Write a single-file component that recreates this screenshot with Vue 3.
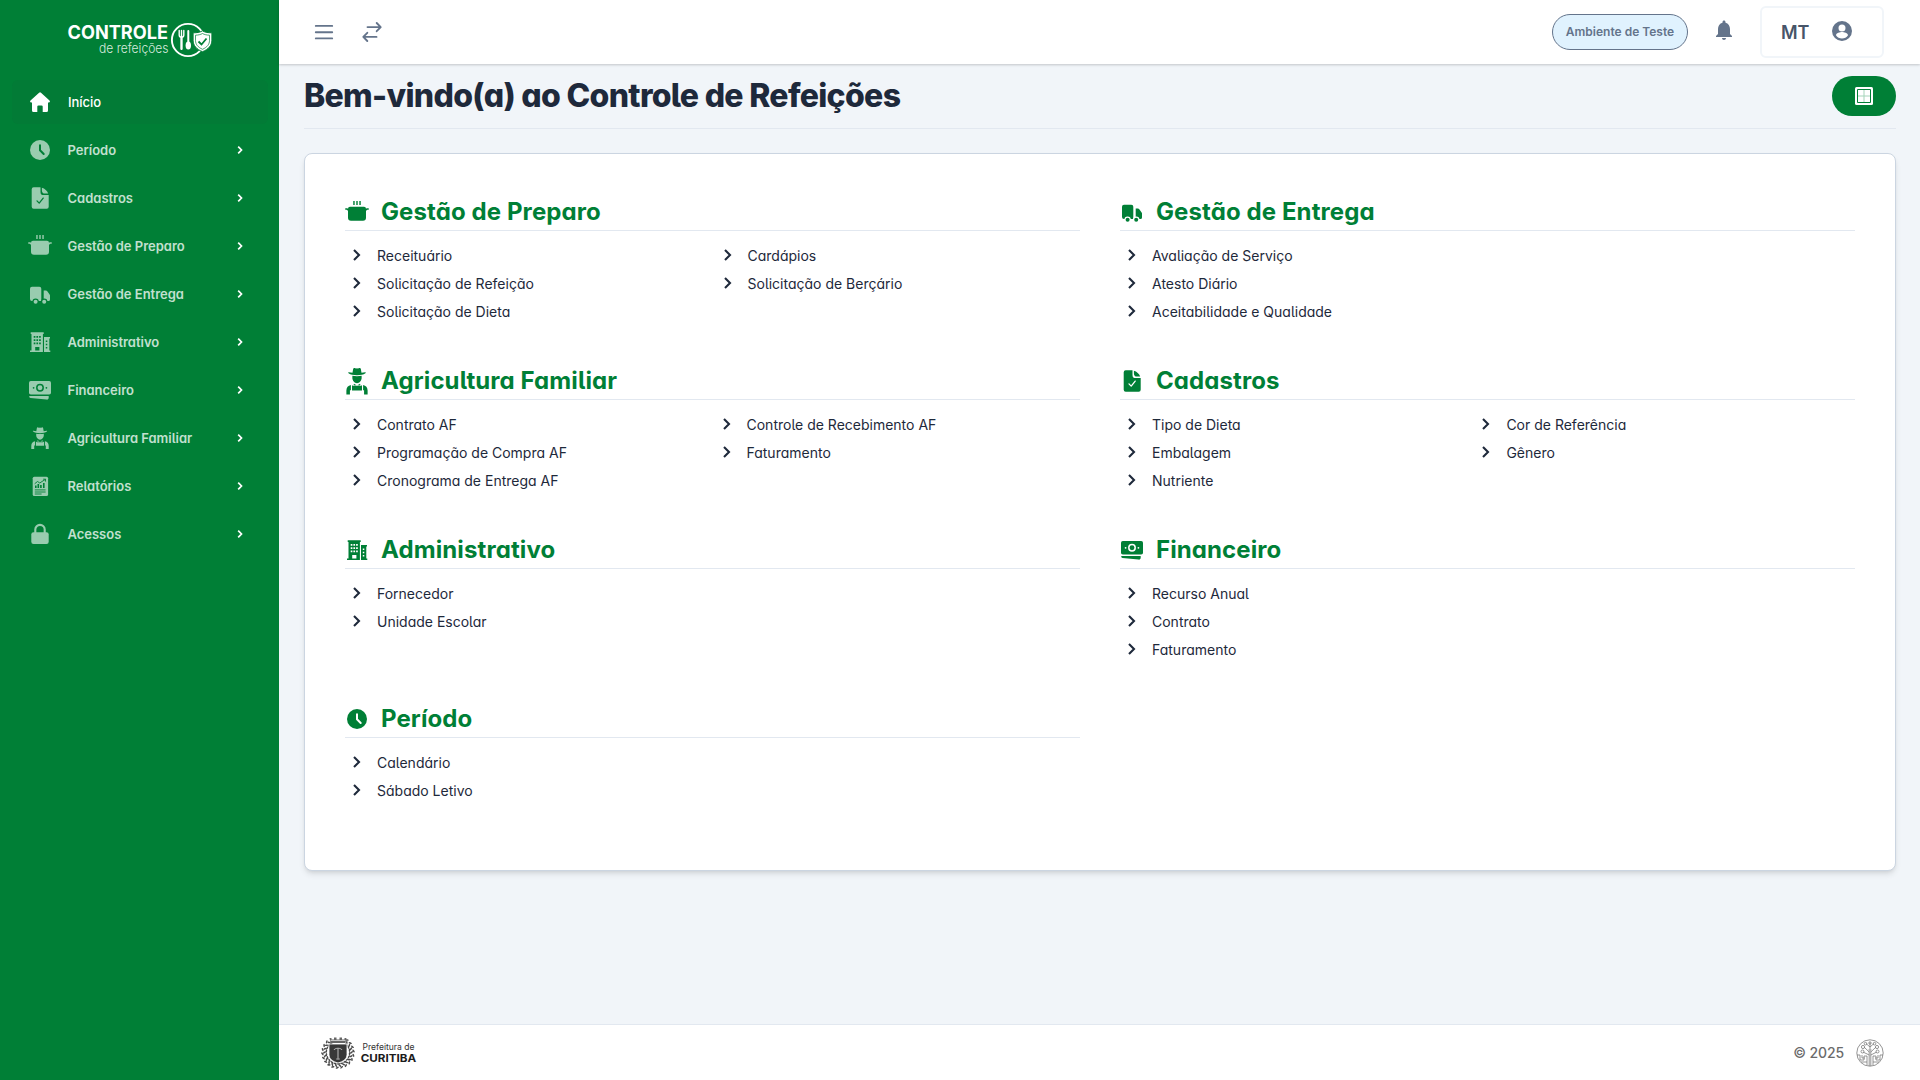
<script setup>
import { h } from 'vue'

const p = (d, extra = {}) => h('path', { d, ...extra })
const line = (d, w = 1.5, color = 'currentColor') =>
  h('path', { d, fill: 'none', stroke: color, 'stroke-width': w, 'stroke-linecap': 'round', 'stroke-linejoin': 'round' })
const cut = 'var(--cut)'

const glyphs = {
  home: () => [
    p('M11.1 2.7a1.4 1.4 0 0 1 1.9 0l8.5 7.9c.8.8.4 1.9-.6 1.9H20v8a1.500 1.500 0 0 1-1.500 1.500h-3.800v-5.400a1.200 1.200 0 0 0-1.200-1.200h-3a1.200 1.200 0 0 0-1.200 1.200V22H5.500A1.500 1.500 0 0 1 4 20.500v-8h-.9c-1 0-1.400-1.100-.6-1.900z'),
  ],
  clock: () => [h('circle', { cx: 12, cy: 12, r: 10 }), line('M12 7.200v5l3.700 3.800', 2, cut)],
  file: () => [
    p('M5.700 1.300h6.800v4.600a3.200 3.200 0 0 0 3.200 3.200h5v11.600a2 2 0 0 1-2 2h-13a2 2 0 0 1-2-2V3.300a2 2 0 0 1 2-2z'),
    p('M13.900 1.700c2.900.8 5.300 3 6.300 5.900h-3.200a3.100 3.100 0 0 1-3.100-3.100z'),
    line('M9 14.900l2.200 2.200 4-5', 1.300, cut),
  ],
  pot: () => [
    p('M8 1h1.900v4H8zM11.050 1h1.900v4h-1.900zM14.100 1H16v4h-1.900z', { opacity: 0.75 }),
    p('M5 6.700h14a2 2 0 0 1 2 2V17.700a3 3 0 0 1-3 3H6a3 3 0 0 1-3-3V8.700a2 2 0 0 1 2-2z'),
    line('M.8 8.900h1.100L4 10.700M23.200 8.900h-1.100L20 10.700', 1.500),
  ],
  truck: () => [
    p('M4 4.700h7.300a2 2 0 0 1 2 2V19H4a2 2 0 0 1-2-2V6.700a2 2 0 0 1 2-2z'),
    p('M15.700 8.500h2.200c.6 0 1 .2 1.400.7l2.300 3.200c.3.400.4.800.4 1.200V17.500a1.500 1.500 0 0 1-1.500 1.500h-4.800z'),
    h('circle', { cx: 7.6, cy: 19.8, r: 3.2, fill: cut }),
    h('circle', { cx: 16.2, cy: 19.8, r: 3.2, fill: cut }),
    h('circle', { cx: 7.6, cy: 19.8, r: 2 }),
    h('circle', { cx: 16.2, cy: 19.8, r: 2 }),
  ],
  building: () => [
    p('M2.700 2.300h13v1.600h-.8V22H2v-1.500h1.500V3.900h-.8zM16 7h6v1.500h-.7v12h1V22H16z'),
    p('M5.700 6h1.700v1.700H5.700zM8.400 6h1.700v1.700H8.400zM11.100 6h1.700v1.700h-1.700zM5.700 9.300h1.700V11H5.700zM8.400 9.300h1.700V11H8.400zM11.100 9.300h1.700V11h-1.700zM5.700 12.600h1.700v1.700H5.700zM8.400 12.600h1.700v1.700H8.400zM11.100 12.600h1.700v1.700h-1.700zM7.200 17h4.200v3.500H7.200zM17.800 10.500h1.500v1.500h-1.500zM17.800 13.700h1.500v1.500h-1.500zM17.800 16.900h1.500v1.500h-1.500z', { fill: cut }),
  ],
  money: () => [
    h('rect', { x: 1, y: 3, width: 22, height: 13.6, rx: 1.8 }),
    h('circle', { cx: 12, cy: 9.8, r: 3.2, fill: 'none', stroke: cut, 'stroke-width': 1.5 }),
    h('circle', { cx: 5.6, cy: 9.8, r: 0.9, fill: cut }),
    h('circle', { cx: 18.4, cy: 9.8, r: 0.9, fill: cut }),
    p('M1.300 18h19.400v1.800c0 1.200-.9 2-2.200 1.800L2.500 20c-.7-.1-1.200-.5-1.200-1.200z'),
  ],
  farmer: () => [
    p('M8.300 5.200l.6-3.200c.1-.6.8-.9 1.300-.6.6.4 1 .4 1.800.1.800.3 1.200.3 1.800-.1.500-.3 1.200 0 1.300.6l.6 3.200 3-.4c.5 0 .6.5.2.8C17.300 6.800 15 7.200 12 7.200s-5.300-.4-6.900-1.600c-.4-.3-.3-.8.2-.8z'),
    p('M8.200 7.700c2.500.5 5.100.5 7.600 0v1.900c0 2-1.700 4.200-3.800 4.200s-3.800-2.200-3.800-4.200z'),
    p('M9.500 14.300l2.500 1.400 2.500-1.400.4 1.300H9.100z'),
    p('M7 15.300v4.200h-.8V23H3.300v-3.300c0-2.300 1.400-4 3.700-4.400zM17 15.300v4.200h.8V23h2.900v-3.300c0-2.300-1.400-4-3.700-4.400z'),
    p('M7.900 15.400l1.200.8h5.800l1.200-.8v4.300H7.900z'),
  ],
  report: () => [
    h('rect', { x: 4.7, y: 2.7, width: 15.4, height: 19.3, rx: 1.6 }),
    line('M7 9.500l2.500-2 2.300 1.500L14 7.500l3.300-2M15.500 5.200h2v2', 0.9, cut),
    p('M7 11.500h1.600v2.500H7zM9.500 10h1.600v4H9.500zM12.100 11h1.600v3h-1.600zM15 9h1.600v5H15z', { fill: cut }),
    line('M7.200 15.900h10M7.200 18h10M7.200 20h6', 0.9, cut),
  ],
  lock: () => [
    line('M7.300 11V7.600a4.700 4.700 0 0 1 9.400 0V11', 2.100),
    h('rect', { x: 3.300, y: 10.3, width: 17.4, height: 11.7, rx: 2.2 }),
  ],
}

const Glyph = (props) =>
  h('svg', { viewBox: '0 0 24 24', width: 24, height: 24, fill: 'currentColor', style: { display: 'block', overflow: 'visible' } }, glyphs[props.name]())
Glyph.props = ['name']

const menu = [
  { label: 'Início', icon: 'home', active: true },
  { label: 'Período', icon: 'clock' },
  { label: 'Cadastros', icon: 'file' },
  { label: 'Gestão de Preparo', icon: 'pot' },
  { label: 'Gestão de Entrega', icon: 'truck' },
  { label: 'Administrativo', icon: 'building' },
  { label: 'Financeiro', icon: 'money' },
  { label: 'Agricultura Familiar', icon: 'farmer' },
  { label: 'Relatórios', icon: 'report' },
  { label: 'Acessos', icon: 'lock' },
]

const sections = [
  { title: 'Gestão de Preparo', icon: 'pot', split: 370.5, items: ['Receituário', 'Solicitação de Refeição', 'Solicitação de Dieta', 'Cardápios', 'Solicitação de Berçário'] },
  { title: 'Gestão de Entrega', icon: 'truck', split: 370.5, items: ['Avaliação de Serviço', 'Atesto Diário', 'Aceitabilidade e Qualidade'] },
  { title: 'Agricultura Familiar', icon: 'farmer', split: 369.5, items: ['Contrato AF', 'Programação de Compra AF', 'Cronograma de Entrega AF', 'Controle de Recebimento AF', 'Faturamento'] },
  { title: 'Cadastros', icon: 'file', split: 354.4, items: ['Tipo de Dieta', 'Embalagem', 'Nutriente', 'Cor de Referência', 'Gênero'] },
  { title: 'Administrativo', icon: 'building', split: 370.5, items: ['Fornecedor', 'Unidade Escolar'] },
  { title: 'Financeiro', icon: 'money', split: 370.5, items: ['Recurso Anual', 'Contrato', 'Faturamento'] },
  { title: 'Período', icon: 'clock', split: 370.5, items: ['Calendário', 'Sábado Letivo'] },
]

// Wreath around the coat of arms: three rings of small leaves, open at the top.
const leaves = Array.from({ length: 54 }, (_, i) => {
  const deg = (i * 290) / 53 - 55
  const a = (deg * Math.PI) / 180
  const r = [15.2, 13.2, 11.4][i % 3]
  return { x: 17 + Math.cos(a) * r * 1.03, y: 17.5 + Math.sin(a) * r, rot: deg + [60, -40, 100][i % 3] }
})
</script>

<template>
  <div class="layout">
    <aside class="sidebar">
      <div class="brand">
        <svg width="150" height="40" viewBox="62 20 150 40">
          <text x="67.500" y="39.300" font-size="19" font-weight="700" fill="#fff" textLength="100.500" lengthAdjust="spacingAndGlyphs">CONTROLE</text>
          <text x="99" y="52.800" font-size="13" font-weight="300" fill="#d5eadd" textLength="69.500" lengthAdjust="spacingAndGlyphs">de refeições</text>
          <circle cx="188" cy="40" r="16.100" fill="none" stroke="#fff" stroke-width="1.900" />
          <path d="M179.200 30.500v4.500a2.300 2.300 0 0 0 4.600 0v-4.500M181.500 30.500V49" fill="none" stroke="#fff" stroke-width="1.400" stroke-linecap="round" />
          <path d="M181.500 37v12" stroke="#fff" stroke-width="2.200" stroke-linecap="round" />
          <path d="M188.300 31v12" stroke="#fff" stroke-width="2" stroke-linecap="round" />
          <ellipse cx="188.300" cy="45.500" rx="2.700" ry="4" fill="#fff" />
          <path d="M202.500 30.800c2.600 1.700 5.900 2 9.400 2v7.400c0 5.300-3.300 9-9.400 11.500-6.100-2.500-9.400-6.200-9.400-11.500v-7.400c3.500 0 6.800-.3 9.400-2z" fill="#fff" stroke="#007f36" stroke-width="1" />
          <path d="M202.500 33.500c2 1.200 4.400 1.600 7 1.700v5.200c0 4-2.400 6.800-7 8.900-4.600-2.100-7-4.900-7-8.900v-5.200c2.600-.1 5-.5 7-1.700z" fill="#fff" stroke="#007f36" stroke-width=".7" />
          <path d="M198.500 41.500l3 3 5-6" fill="none" stroke="#007f36" stroke-width="1.800" />
        </svg>
      </div>
      <nav class="menu">
        <a v-for="m in menu" :key="m.label" class="menu-item" :class="{ active: m.active }">
          <Glyph :name="m.icon" />
          <span class="menu-label">{{ m.label }}</span>
          <svg v-if="!m.active" class="menu-arrow" width="16" height="16" viewBox="0 0 16 16">
            <path d="M6.200 4.600L9.500 8l-3.300 3.400" fill="none" stroke="#fff" stroke-width="1.700" />
          </svg>
        </a>
      </nav>
    </aside>

    <div class="main">
      <header class="topbar">
        <div class="topbar-left">
          <svg width="24" height="24" viewBox="0 0 24 24" fill="none" stroke="#64748b" stroke-width="1.900" stroke-linecap="round">
            <path d="M3.800 5.900h16.400M3.800 12.200h16.400M3.800 18.400h16.400" />
          </svg>
          <svg width="24" height="24" viewBox="0 0 24 24" fill="none" stroke="#64748b" stroke-width="1.900" stroke-linecap="round" stroke-linejoin="round">
            <path d="M7.500 7.100h13M16.700 3l4 4.100-4 4.100M16.500 16.900h-13M7.300 12.800l-4 4.100 4 4.100" />
          </svg>
        </div>
        <div class="topbar-right">
          <span class="env">Ambiente de Teste</span>
          <svg class="bell" width="24" height="24" viewBox="0 0 24 24" fill="#64748b">
            <path d="M12 22c1.100 0 2-.9 2-2h-4c0 1.100.9 2 2 2zm6-6v-5c0-3.070-1.630-5.640-4.500-6.320V4c0-.83-.67-1.500-1.500-1.500s-1.500.67-1.500 1.500v.68C7.640 5.360 6 7.920 6 11v5l-2 2v1h16v-1l-2-2z" />
          </svg>
          <div class="user">
            <span>MT</span>
            <svg width="24" height="24" viewBox="0 0 24 24" fill="#64748b">
              <path d="M12 2a10 10 0 1 0 0 20 10 10 0 0 0 0-20zm0 3.500a3.500 3.500 0 1 1 0 7 3.500 3.500 0 0 1 0-7zm0 13.900a7.200 7.200 0 0 1-6-3.220c.03-1.990 4-3.080 6-3.080s5.970 1.090 6 3.080a7.200 7.200 0 0 1-6 3.220z" fill-rule="evenodd" />
            </svg>
          </div>
        </div>
      </header>

      <main class="content">
        <div class="page-head">
          <h1>Bem-vindo(a) ao Controle de Refeições</h1>
          <button class="grid-btn">
            <svg width="20" height="20" viewBox="0 0 20 20">
              <rect x="1" y="1" width="18" height="18" rx="1.500" fill="#fff" />
              <path d="M3.500 3.500h13v13h-13z" fill="none" stroke="#007f36" stroke-width="1" />
              <path d="M10 4v12M4 10h12" stroke="#a5d4ba" stroke-width="1" />
            </svg>
          </button>
        </div>

        <div class="card">
          <section v-for="s in sections" :key="s.title" class="section">
            <h2>
              <Glyph :name="s.icon" :class="{ tall: s.icon === 'farmer' }" />
              <span>{{ s.title }}</span>
            </h2>
            <ul :style="{ gridTemplateColumns: s.split + 'px 1fr' }">
              <li v-for="i in s.items" :key="i">
                <svg width="24" height="24" viewBox="0 0 24 24">
                  <path d="M9 6.100l5 5-5 5" fill="none" stroke="#1e293b" stroke-width="2.100" />
                </svg>
                <span>{{ i }}</span>
              </li>
            </ul>
          </section>
        </div>
      </main>

      <footer class="footer">
        <svg width="98" height="36" viewBox="0 0 98 36">
          <g fill="#4a4a4a">
            <ellipse v-for="(l, k) in leaves" :key="k" :cx="l.x" :cy="l.y" rx="1.700" ry=".8" :transform="`rotate(${l.rot} ${l.x} ${l.y})`" />
          </g>
          <path d="M8.500 3h2v1.500h2.500V2.500h2.500v2h3v-2H21v2h2.500V3h2l-1 5h-15z" fill="#666" />
          <path d="M9.500 5.500h15" stroke="#ddd" stroke-width=".8" />
          <path d="M8 9h18v10.500c0 4.500-3.500 7-9 8.500-5.500-1.500-9-4-9-8.500z" fill="#383838" stroke="#fff" stroke-width=".8" />
          <path d="M17 14v9.500M13 15c.8-2.300 7.200-2.300 8 0M15.300 24h3.400" fill="none" stroke="#ccc" stroke-width=".9" />
          <text x="41.500" y="15.300" font-size="8.500" fill="#333" textLength="52" lengthAdjust="spacingAndGlyphs">Prefeitura de</text>
          <text x="39.700" y="26.700" font-size="11" font-weight="700" fill="#1c1c1c" textLength="55.500" lengthAdjust="spacingAndGlyphs">CURITIBA</text>
        </svg>
        <div class="copy">
          <span>© 2025</span>
          <svg width="28" height="28" viewBox="0 0 28 28" fill="none" stroke="#7b7b7b" stroke-width=".8">
            <circle cx="14" cy="14" r="13.200" />
            <path d="M13.200 27V10M14.800 27V10M14 10V3.500M14 8l-4-3.500M14 8l4-3.500M13.200 13L8 8M14.800 13L20 8M13.200 16L7 13M14.800 16l6-3" />
            <circle cx="14" cy="4" r="1.200" /><circle cx="9.500" cy="4.700" r="1.300" /><circle cx="18.500" cy="4.700" r="1.300" />
            <circle cx="7" cy="8" r="1.600" /><circle cx="21" cy="8" r="1.600" /><circle cx="6.500" cy="12.500" r="1.500" /><circle cx="21.500" cy="12.500" r="1.500" />
            <path d="M1 16h3v5h4v-4h3v6M27 16h-3v5h-4v-4h-3v6M6 16v3h3M22 16v3h-3M5 23h6v3M23 23h-6v3" />
          </svg>
        </div>
      </footer>
    </div>
  </div>
</template>

<style>
body {
  margin: 0;
}
</style>

<style scoped>
.layout {
  display: flex;
  height: 1080px;
  font-family: Inter, "Liberation Sans", sans-serif;
  font-feature-settings: "cv02", "cv03", "cv04", "cv05", "cv11";
  color: #1e293b;
  background: #f1f5f9;
  overflow: hidden;
}
.sidebar {
  width: 279px;
  flex: none;
  box-sizing: border-box;
  background: #007f36;
  --cut: #007f36;
}
.brand {
  height: 60px;
  padding: 20px 0 0 62px;
  box-sizing: border-box;
  font-feature-settings: normal;
}
.brand svg {
  display: block;
}
.menu {
  padding: 20px 11px 0 12px;
  display: flex;
  flex-direction: column;
  gap: 4px;
}
.menu-item {
  height: 44px;
  display: flex;
  align-items: center;
  padding: 0 20px 0 16px;
  border-radius: 6px;
  color: #99ccaf;
}
.menu-item.active {
  background: #027b36;
  color: #fff;
}
.menu-label {
  flex: 1;
  margin-left: 15.5px;
  font-size: 13px;
  font-weight: 600;
  letter-spacing: -0.01px;
  color: #c2e0cf;
}
.active .menu-label {
  margin-left: 16px;
  color: #fff;
  font-weight: 500;
}
.main {
  flex: 1;
  min-width: 0;
  display: flex;
  flex-direction: column;
}
.topbar {
  height: 64px;
  flex: none;
  box-sizing: border-box;
  background: #fff;
  display: flex;
  justify-content: space-between;
  padding: 0 36px 0 33px;
  box-shadow: 0 1px 3px rgba(0, 0, 0, 0.1), 0 1px 2px rgba(0, 0, 0, 0.1);
  position: relative;
}
.topbar-left,
.topbar-right {
  display: flex;
  align-items: center;
}
.topbar-left {
  gap: 24px;
}
.env {
  box-sizing: border-box;
  width: 136px;
  height: 36px;
  border: 1px solid #64748b;
  border-radius: 18px;
  background: #e0f2fe;
  color: #64748b;
  font-size: 12px;
  font-weight: 600;
  line-height: 34px;
  text-align: center;
}
.bell {
  margin: -4px 24.5px 0 23.5px;
}
.user {
  box-sizing: border-box;
  width: 124px;
  height: 52px;
  border: 2px solid #f1f5f9;
  border-radius: 6px;
  display: flex;
  align-items: center;
  justify-content: space-between;
  padding: 0 28px 0 19px;
  color: #475569;
  font-size: 18px;
  font-weight: 600;
}
.user span {
  margin-top: 1px;
}
.user svg {
  margin-top: -2px;
}
.content {
  flex: 1;
  padding: 0 24px 0 25px;
}
.page-head {
  height: 65px;
  box-sizing: border-box;
  border-bottom: 1px solid #e2e8f0;
  display: flex;
  justify-content: space-between;
  align-items: center;
}
h1 {
  margin: 0;
  font-size: 32px;
  line-height: 40px;
  font-weight: 800;
  letter-spacing: -0.69px;
}
.grid-btn {
  width: 64px;
  height: 40px;
  border: 0;
  padding: 0;
  border-radius: 20px;
  background: #007f36;
  display: flex;
  align-items: center;
  justify-content: center;
}
.card {
  margin-top: 24px;
  box-sizing: border-box;
  height: 718px;
  padding: 40px 40px 0;
  border: 1px solid #cbd5e1;
  border-radius: 8px;
  background: #fff;
  --cut: #fff;
  box-shadow: 0 4px 6px -1px rgba(0, 0, 0, 0.1), 0 2px 4px -2px rgba(0, 0, 0, 0.1);
  display: grid;
  grid-template-columns: 1fr 1fr;
  grid-auto-rows: 169px;
  column-gap: 40px;
}
h2 {
  margin: 0;
  height: 37px;
  box-sizing: border-box;
  border-bottom: 1px solid #e2e8f0;
  display: flex;
  align-items: center;
  gap: 12px;
  color: #007f36;
  font-size: 24px;
  line-height: 36px;
  font-weight: 700;
  letter-spacing: 0.1px;
}
.tall {
  transform: scale(1.22);
}
ul {
  list-style: none;
  margin: 0;
  padding: 11px 0 0;
  display: grid;
  grid-auto-flow: column;
  grid-template-rows: repeat(3, 28px);
}
li {
  display: flex;
  align-items: center;
  gap: 8px;
  font-size: 14px;
  white-space: nowrap;
}
li span {
  margin-top: -2px;
}
.footer {
  height: 56px;
  flex: none;
  box-sizing: border-box;
  border-top: 1px solid #e2e8f0;
  background: #fff;
  display: flex;
  align-items: center;
  justify-content: space-between;
  padding: 0 36px 0 42px;
  font-feature-settings: normal;
}
.copy {
  display: flex;
  align-items: center;
  gap: 12px;
  font-size: 14px;
  font-weight: 500;
  letter-spacing: -0.1px;
  color: #6b6b6b;
}
</style>
